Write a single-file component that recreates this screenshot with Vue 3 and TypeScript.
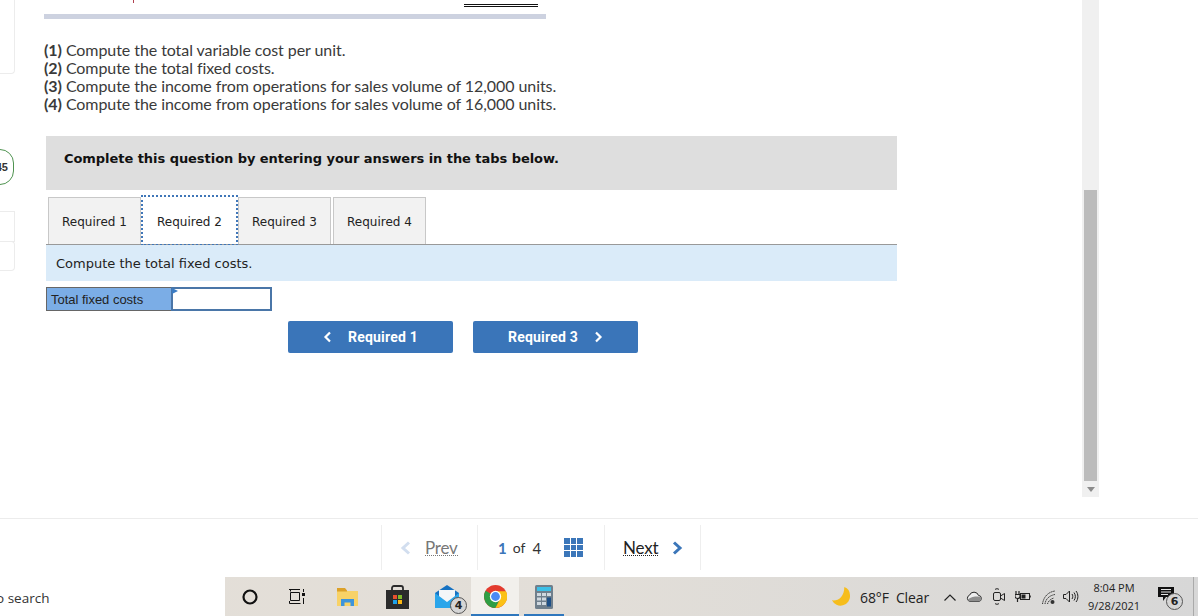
<script setup lang="ts">
const steps = [
  { n: '(1)', t: 'Compute the total variable cost per unit.' },
  { n: '(2)', t: 'Compute the total fixed costs.' },
  { n: '(3)', t: 'Compute the income from operations for sales volume of 12,000 units.' },
  { n: '(4)', t: 'Compute the income from operations for sales volume of 16,000 units.' },
]
const tabs = ['Required 1', 'Required 2', 'Required 3', 'Required 4']
</script>

<template>
  <div class="page">
    <div class="upper">
      <aside class="rail">
        <div class="rail-card first"></div>
        <div class="badge"><span>45</span></div>
        <div class="rail-card second"></div>
        <div class="rail-card third"></div>
      </aside>
      <main class="main">
        <div class="topmarks"><i class="tick"></i><i class="dbl"></i></div>
        <div class="rule"></div>
        <div class="steps">
          <div v-for="s in steps" :key="s.n" class="step"><b>{{ s.n }}</b> {{ s.t }}</div>
        </div>
        <div class="prompt">Complete this question by entering your answers in the tabs below.</div>
        <div class="tabs">
          <div v-for="(t, i) in tabs" :key="t" class="tab" :class="{ active: i === 1 }">{{ t }}</div>
        </div>
        <div class="desc">Compute the total fixed costs.</div>
        <div class="answer">
          <div class="answer-label">Total fixed costs</div>
          <div class="answer-input"><i class="flag"></i></div>
        </div>
        <div class="btns">
          <div class="btn">
            <svg width="9" height="12" viewBox="0 0 9 12"><path d="M7 1.500 2.500 6 7 10.500" fill="none" stroke="#fff" stroke-width="2.200"/></svg>
            <span>Required 1</span>
          </div>
          <div class="btn">
            <span>Required 3</span>
            <svg width="9" height="12" viewBox="0 0 9 12"><path d="M2 1.500 6.500 6 2 10.500" fill="none" stroke="#fff" stroke-width="2.200"/></svg>
          </div>
        </div>
      </main>
      <div class="scroll">
        <div class="thumb"></div>
        <svg class="arrow" width="8" height="5" viewBox="0 0 8 5"><path d="M0 0h8L4 5z" fill="#8b8b8b"/></svg>
      </div>
    </div>

    <div class="pager-row">
      <div class="pager">
        <div class="pcell prev">
          <svg width="11" height="14" viewBox="0 0 11 14"><path d="M9 1.500 3 7l6 5.500" fill="none" stroke="#d2deef" stroke-width="3"/></svg>
          <span class="plink muted">Prev</span>
        </div>
        <div class="pcell count">
          <b>1</b><span class="of">of</span><span class="tot">4</span>
          <div class="grid9"><i v-for="n in 9" :key="n"></i></div>
        </div>
        <div class="pcell next">
          <span class="plink">Next</span>
          <svg width="11" height="14" viewBox="0 0 11 14"><path d="M2 1.500 8 7l-6 5.500" fill="none" stroke="#3b76b9" stroke-width="3"/></svg>
        </div>
      </div>
    </div>

    <footer class="taskbar">
      <div class="searchbox"><span>o search</span></div>
      <div class="apps">
        <div class="app w1">
          <svg width="18" height="18" viewBox="0 0 18 18"><circle cx="9" cy="9" r="6.500" fill="none" stroke="#111" stroke-width="2.200"/></svg>
        </div>
        <div class="app w2">
          <svg width="16" height="15" viewBox="0 0 16 15" fill="none" stroke="#111"><path d="M0 .500h11M1.500 0v2.500M.5 14.500V12M.5 14.500h11M1.500 3.500h9v8h-9z"/><path d="M14.500 0v3M14.500 9v6"/><rect x="13" y="4" width="3" height="3" fill="#111" stroke="none"/></svg>
        </div>
        <div class="app w3">
          <svg width="21" height="18" viewBox="0 0 21 18"><path d="M0 3h21v15H0z" fill="#f8d267"/><path d="M0 0h8l2 2.500v1H0z" fill="#dca129"/><path d="M4 11h13v7h-3.500v-3.500h-6V18H4z" fill="#3d94dc"/></svg>
        </div>
        <div class="app w4">
          <svg width="23" height="24" viewBox="0 0 23 24"><path d="M6 7V3a2 2 0 0 1 2-2h7a2 2 0 0 1 2 2v4" fill="none" stroke="#2b2b2b" stroke-width="1.800"/><path d="M0 5h23v19H0z" fill="#2b2b2b"/><rect x="7" y="10" width="4" height="4" fill="#e8502e"/><rect x="12" y="10" width="4" height="4" fill="#7fba2a"/><rect x="7" y="15" width="4" height="4" fill="#1ea1e8"/><rect x="12" y="15" width="4" height="4" fill="#fcb713"/></svg>
        </div>
        <div class="app w5">
          <svg width="24" height="23" viewBox="0 0 24 23"><path d="M0 8 12 0l12 8v15H0z" fill="#1672c2"/><path d="M4 5h16v9l-8 4-8-4z" fill="#f3f6f8"/><path d="M0 8l12 9 12-9v15H0z" fill="#2aa5ea"/></svg>
          <span class="count-badge mail">4</span>
        </div>
        <div class="app w6 running active">
          <svg width="23" height="23" viewBox="0 0 22 22">
            <circle cx="11" cy="11" r="11" fill="#e33b2e"/>
            <path d="M11 11 1.500 5.500 A11 11 0 0 0 11 22 L15 14z" fill="#2f9e44"/>
            <path d="M11 6 21 6 A11 11 0 0 1 11 22 L15 14z" fill="#fbc116"/>
            <circle cx="11" cy="11" r="5.400" fill="#fff"/><circle cx="11" cy="11" r="4.200" fill="#4a8af4"/>
          </svg>
        </div>
        <div class="app w7 running">
          <svg width="18" height="24" viewBox="0 0 18 24"><rect width="18" height="24" rx="1.500" fill="#6f7f8c"/><rect x="2" y="2" width="14" height="4" fill="#3cc0e8"/><g fill="#cfd8df"><rect x="2" y="8" width="4" height="3"/><rect x="7" y="8" width="4" height="3"/><rect x="12" y="8" width="4" height="3"/><rect x="2" y="12.500" width="4" height="3"/><rect x="7" y="12.500" width="4" height="3"/><rect x="2" y="17" width="4" height="3"/><rect x="7" y="17" width="4" height="3"/></g><rect x="12" y="12.500" width="4" height="9" fill="#1d4f86"/></svg>
        </div>
      </div>
      <div class="tray">
        <svg class="moon" width="18" height="19" viewBox="0 0 19 20"><path d="M13 0a9.500 9.500 0 0 1 6 9 10 10 0 0 1-19 5c6 1 13-3 13-14z" fill="#f6bd1c"/></svg>
        <span class="weather">68°F&nbsp; Clear</span>
        <div class="trayicons">
          <svg class="ti-chev" width="12" height="7" viewBox="0 0 12 7"><path d="M.500 6.500 6 1l5.500 5.500" fill="none" stroke="#222" stroke-width="1.200"/></svg>
          <svg class="ti-cloud" width="17" height="11" viewBox="0 0 17 11"><path d="M4 10.500a3.300 3.300 0 0 1-.5-6.300 4.800 4.800 0 0 1 9 .2 3.100 3.100 0 0 1 .5 6.100z" fill="#eee" stroke="#222" stroke-width="1"/><path d="M1.500 8.500C5 6 8 5.500 12 5.500c2 0 3.500 1.500 3.500 3l-2 2H3.500z" fill="#8e8e8e"/></svg>
          <svg class="ti-cam" width="12" height="17" viewBox="0 0 12 17" fill="none" stroke="#222"><rect x=".5" y="4.500" width="7" height="8" rx="1.500"/><path d="M2 1.500c1-1 3-1 4 0M2 15.500c1 1 3 1 4 0"/><path d="M7.500 8l4-2.500v7l-4-2.500"/></svg>
          <svg class="ti-plug" width="16" height="11" viewBox="0 0 16 11" fill="none" stroke="#222"><rect x="5.500" y="2.500" width="9" height="6"/><rect x="6.500" y="3.500" width="4" height="4" fill="#222" stroke="none"/><path d="M15 4.500v2" stroke-width="1.600"/><path d="M1 0v3M4 0v3M0 3.500h5v2c0 1-1 2-2.500 2S0 6.500 0 5.500zM2.500 7.500V11" stroke-width="1.200"/></svg>
          <svg class="ti-wifi" width="13" height="14" viewBox="0 0 13 14" fill="none" stroke="#333"><path d="M.5 14C1.500 7 6 2 13 1M3 14C3.500 9.500 7 5.500 13 4.500M5.500 14C6 12 8 9 12 8" stroke-dasharray="1.500 .7"/><circle cx="10.500" cy="12" r="2" fill="#333" stroke="none"/></svg>
          <svg class="ti-vol" width="16" height="13" viewBox="0 0 16 13" fill="none" stroke="#222"><path d="M.5 4.500h2.500l3.500-3.500v11L3 8.500H.5z"/><path d="M9 4c1 1.500 1 3.500 0 5M11 2.500c1.800 2.500 1.800 5.500 0 8M13 1c2.500 3 2.500 8 0 11"/></svg>
        </div>
        <div class="clock"><div>8:04 PM</div><div>9/28/2021</div></div>
        <div class="notif">
          <svg width="16" height="14" viewBox="0 0 16 14"><path d="M0 0h16v10H8l-3 4v-4H0z" fill="#111"/><path d="M3 2.500h10M3 5h10M3 7.500h7" stroke="#e4e4e4"/></svg>
          <span class="count-badge note">6</span>
        </div>
      </div>
      <i class="desktop-line"></i>
    </footer>
  </div>
</template>

<style>
html, body { margin: 0; background: #fff; overflow: hidden; }
</style>

<style scoped>
.page { width: 1198px; height: 616px; display: flex; flex-direction: column; overflow: hidden; background: #fff; font-family: "Liberation Sans", sans-serif; }
.upper { height: 518px; display: flex; flex: none; }
.rail { width: 15px; flex: none; display: flex; flex-direction: column; align-items: stretch; }
.rail-card { box-sizing: border-box; border: 1px solid #ececec; border-left: 0; border-radius: 0 4px 4px 0; }
.first { height: 74px; border-top: 0; border-radius: 0 0 4px 0; }
.second { height: 31px; margin-top: 26px; border-radius: 0; }
.third { height: 30px; margin-top: -1px; }
.badge { height: 36px; margin-top: 75px; margin-left: -19px; width: 33px; box-sizing: border-box; border: 1px solid #4f9350; border-radius: 14px; display: flex; align-items: center; justify-content: flex-end; padding-right: 5px; font: bold 11px "Liberation Sans", sans-serif; color: #333; }
.main { width: 1067px; flex: none; box-sizing: border-box; padding-left: 29px; display: flex; flex-direction: column; align-items: flex-start; }
.topmarks { height: 14px; width: 502px; position: relative; flex: none; }
.tick { position: absolute; left: 89px; top: 0; width: 1px; height: 3px; background: #b04050; }
.dbl { position: absolute; left: 420px; top: 4px; width: 74px; height: 3px; box-sizing: border-box; border-top: 1px solid #111; border-bottom: 1px solid #111; }
.rule { width: 502px; height: 5px; background: #cdd2e0; flex: none; }
.steps { margin-top: 22px; font: 16px/18px "Lato", sans-serif; letter-spacing: -.07px; color: #3a3a3a; }
.step b { font-weight: 700; }
.prompt { margin: 23px 0 0 2px; width: 851px; height: 54px; box-sizing: border-box; background: #dedede; padding: 14px 0 0 18px; font: bold 13px/17px "DejaVu Sans", sans-serif; letter-spacing: -.05px; color: #111; }
.tabs { display: flex; gap: 2px; margin: 7px 0 0 2px; width: 851px; height: 48px; box-sizing: border-box; padding-left: 2px; border-bottom: 1px solid #999; flex: none; }
.tab { width: 93px; height: 47px; box-sizing: border-box; background: #f2f2f2; border: 1px solid #c8c8c8; border-bottom: 0; text-align: center; font: 12px/49px "DejaVu Sans", sans-serif; color: #222; }
.tab.active { background: #fff; outline: 2px dotted #3f76b8; outline-offset: 0; border-color: #fff; }
.desc { margin-left: 2px; width: 851px; height: 36px; box-sizing: border-box; background: #daebf9; padding-left: 10px; font: 13px/37px "DejaVu Sans", sans-serif; color: #222; }
.answer { margin: 6px 0 0 2px; display: flex; width: 226px; height: 24px; flex: none; }
.answer-label { width: 125px; box-sizing: border-box; background: #7badE6; border: 1px solid #666; border-right: 0; padding-left: 4px; font: 13px/23px "Liberation Sans", sans-serif; letter-spacing: -.02px; color: #222; }
.answer-input { flex: 1; box-sizing: border-box; border: 2px solid #4a76a8; position: relative; background: #fff; }
.flag { position: absolute; left: -1px; top: -1px; border-left: 6px solid #3a7cc4; border-top: 3px solid transparent; border-bottom: 3px solid transparent; }
.btns { display: flex; gap: 20px; margin: 10px 0 0 244px; }
.btn { width: 165px; height: 32px; background: #3a75b9; border-radius: 2px; color: #fff; font: bold 14px/33px "Roboto", sans-serif; letter-spacing: .2px; display: flex; align-items: center; justify-content: center; gap: 16px; }
.scroll { width: 17px; height: 497px; background: #f0f0f0; flex: none; position: relative; display: flex; flex-direction: column; align-items: center; }
.thumb { width: 13px; margin-top: 190px; height: 291px; background: #bcbcbc; }
.arrow { margin-top: 6px; }
.pager-row { height: 59px; box-sizing: border-box; border-top: 1px solid #ececec; display: flex; justify-content: flex-start; padding: 6px 0 0 381px; flex: none; }
.pager { display: flex; height: 45px; }
.pcell { height: 45px; box-sizing: border-box; display: flex; align-items: center; border-left: 1px solid #eee; }
.prev { width: 96px; padding-left: 18px; gap: 14px; }
.count { width: 127px; padding-left: 20px; font: 14px "Lato", sans-serif; color: #333; }
.count b { color: #3b76b9; font-size: 15px; }
.of { margin-left: 6px; }
.tot { margin-left: 7px; font-size: 15px; }
.grid9 { margin-left: 23px; display: grid; grid-template-columns: repeat(3, 5.670px); grid-auto-rows: 5.670px; gap: 1px; width: 19px; }
.grid9 i { background: #3b76b9; }
.next { width: 97px; padding-left: 18px; gap: 14px; border-right: 1px solid #eee; }
.plink { font: 17px "Lato", sans-serif; color: #222; border-bottom: 1px dotted #222; line-height: 15px; letter-spacing: -.2px; }
.plink.muted { color: #777; border-bottom-color: #777; }
.taskbar { height: 39px; flex: none; display: flex; align-items: stretch; background: linear-gradient(90deg, #e4dfd8 0%, #e2ded8 50%, #d7d7d7 100%); box-sizing: border-box; position: relative; }
.searchbox { width: 225px; background: #fff; box-sizing: border-box; display: flex; align-items: center; overflow: hidden; padding-top: 2px; }
.searchbox span { margin-left: -4px; font: 13.500px "Open Sans", sans-serif; color: #333; white-space: nowrap; }
.apps { display: flex; align-items: center; margin-left: 1px; }
.app { height: 39px; display: flex; align-items: center; justify-content: center; position: relative; box-sizing: border-box; flex: none; }
.w1 { width: 48px; }
.w2 { width: 46px; }
.w3 { width: 50px; margin-left: 2px; }
.w4 { width: 50px; }
.w5 { width: 49px; }
.w6 { width: 48px; }
.w7 { width: 40px; margin-left: 5px; }
.running { border-bottom: 2px solid #2f77bd; padding-top: 2px; }
.active { background: #f2f0ec; }
.count-badge { position: absolute; box-sizing: border-box; width: 17px; height: 17px; border-radius: 50%; background: #d5d5d5; border: 1px solid #555; font: bold 11px/15px "DejaVu Sans", sans-serif; text-align: center; color: #222; }
.mail { left: 28px; top: 20px; }
.tray { margin-left: 268px; display: flex; align-items: center; }
.moon { margin-right: 10px; }
.weather { width: 83px; font: 14px "Open Sans", sans-serif; letter-spacing: -.1px; color: #222; white-space: nowrap; padding-top: 2px; }
.trayicons { display: flex; align-items: center; width: 145px; }
.ti-chev { margin-left: 1px; margin-top: 2px; }
.ti-cloud { margin-left: 10px; }
.ti-cam { margin-left: 10px; margin-top: 0; }
.ti-plug { margin-left: 10px; }
.ti-wifi { margin-left: 11px; }
.ti-vol { margin-left: 8px; }
.clock { width: 52px; text-align: center; font: 11px/18px "Open Sans", sans-serif; color: #222; }
.notif { position: relative; width: 16px; height: 14px; margin-left: 18px; margin-top: -6px; }
.note { left: 8px; top: 6px; }
.desktop-line { position: absolute; left: 1193px; top: 0; bottom: 0; width: 1px; background: #aaa; }
</style>
